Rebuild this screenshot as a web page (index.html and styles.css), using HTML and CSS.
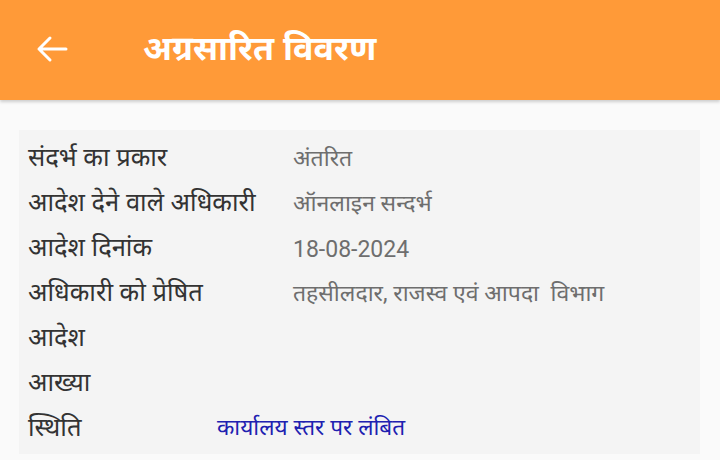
FILE: index.html
```html
<!DOCTYPE html>
<html lang="hi">
<head>
<meta charset="utf-8">
<link rel="stylesheet" href="styles.css">
</head>
<body>
<header class="appbar">
  <span class="back">
    <svg width="32" height="28" viewBox="0 0 32 28" fill="none" stroke="#fff" stroke-width="3" stroke-linecap="round" stroke-linejoin="round">
      <path d="M30 14H3M14 3L3 14L14 25"/>
    </svg>
  </span>
  <h1 class="title">अग्रसारित विवरण</h1>
</header>
<main class="content">
  <section class="card">
    <div class="row"><span class="label">संदर्भ का प्रकार</span><span class="value">अंतरित</span></div>
    <div class="row"><span class="label">आदेश देने वाले अधिकारी</span><span class="value">ऑनलाइन सन्दर्भ</span></div>
    <div class="row"><span class="label">आदेश दिनांक</span><span class="value">18-08-2024</span></div>
    <div class="row"><span class="label">अधिकारी को प्रेषित</span><span class="value">तहसीलदार, राजस्व एवं आपदा&nbsp; विभाग</span></div>
    <div class="row"><span class="label">आदेश</span><span class="value"></span></div>
    <div class="row"><span class="label">आख्या</span><span class="value"></span></div>
    <div class="row"><span class="label status-label">स्थिति</span><span class="status">कार्यालय स्तर पर लंबित</span></div>
  </section>
</main>
</body>
</html>
```

FILE: styles.css
```css
html, body {
  margin: 0;
  padding: 0;
}
body {
  width: 720px;
  height: 460px;
  overflow: hidden;
  background: #fafafa;
  font-family: Roboto, "Noto Sans Devanagari", "Noto Sans", sans-serif;
}
.appbar {
  height: 100px;
  background: #ff9a38;
  display: flex;
  align-items: center;
  box-shadow: 0 2px 3px rgba(0,0,0,0.18);
  position: relative;
}
.back {
  width: 32px;
  height: 28px;
  margin-left: 36px;
  margin-top: -2px;
  display: flex;
}
.title {
  margin: 4px 0 0 75px;
  color: #fff;
  font-family: "Noto Sans Devanagari", "Noto Sans", sans-serif;
  font-size: 34px;
  font-weight: 700;
  line-height: 1;
}
.content {
  padding: 30px 20px 0 19px;
}
.card {
  background: #f4f4f4;
  width: 681px;
  padding: 7px 0 2px 9px;
  box-sizing: border-box;
}
.row {
  display: flex;
  align-items: center;
  height: 45px;
}
.label {
  width: 265px;
  font-family: "Noto Sans Devanagari", "Noto Sans", sans-serif;
  font-size: 25.5px;
  color: #333;
  white-space: nowrap;
}
.value {
  font-size: 23px;
  color: #6e6e6e;
  white-space: nowrap;
}
.status-label {
  width: 189px;
}
.status {
  font-family: "Noto Sans Devanagari", "Noto Sans", sans-serif;
  font-size: 22.6px;
  color: #2020b0;
  white-space: nowrap;
}
```
